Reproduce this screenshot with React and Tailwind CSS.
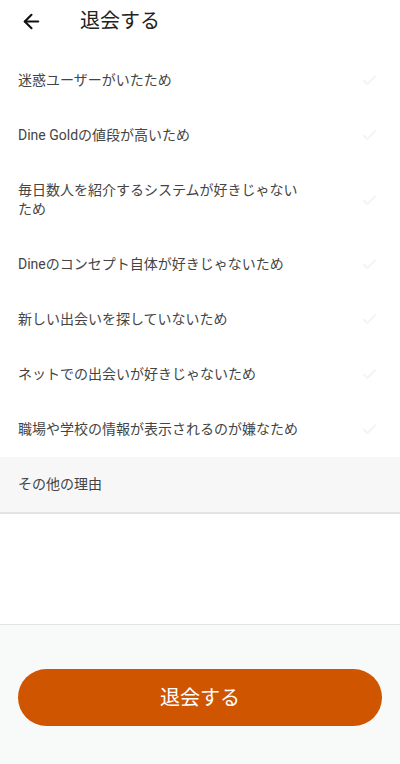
import React, { useState } from 'react';
import { ArrowLeft, Check } from 'lucide-react';

const reasons = [
  '迷惑ユーザーがいたため',
  'Dine Goldの値段が高いため',
  '毎日数人を紹介するシステムが好きじゃないため',
  'Dineのコンセプト自体が好きじゃないため',
  '新しい出会いを探していないため',
  'ネットでの出会いが好きじゃないため',
  '職場や学校の情報が表示されるのが嫌なため',
];

const App = () => {
  const [selected, setSelected] = useState(null);

  return (
    <div
      className="w-[400px] h-[764px] flex flex-col bg-white text-[#222]"
      style={{ fontFamily: 'Roboto, "Noto Sans CJK JP", sans-serif' }}
    >
      <div className="h-[42px] flex items-center shrink-0">
        <button className="w-[62px] pl-[20px] flex items-center">
          <ArrowLeft className="w-[23px] h-[23px] text-[#111]" strokeWidth={2.2} />
        </button>
        <h1 className="ml-[18px] text-[20px] leading-none text-[#222]">退会する</h1>
      </div>

      <div className="pt-[11px]">
        {reasons.map((reason, i) => (
          <button
            key={i}
            onClick={() => setSelected(i)}
            className="w-full flex items-center justify-between pl-[18px] pr-[22px] py-[18px] text-left"
          >
            <span className="max-w-[290px] text-[14px] leading-[19px] text-[#444]">{reason}</span>
            <Check
              className={`w-[17px] h-[17px] shrink-0 ${selected === i ? 'text-[#d05500]' : 'text-[#f3f3f3]'}`}
              strokeWidth={2.5}
            />
          </button>
        ))}
        <div className="h-[57px] flex items-center pl-[18px] bg-[#f7f7f7] border-b-2 border-[#e4e4e4]">
          <span className="text-[14px] text-[#444]">その他の理由</span>
        </div>
      </div>

      <div className="h-[110px] bg-white" />

      <div className="flex-1 bg-[#f8f9f9] border-t border-[#e2e2e2] px-[18px] pt-[44px]">
        <button className="w-full h-[57px] rounded-full bg-[#d05500] text-white text-[20px] flex items-center justify-center">
          退会する
        </button>
      </div>
    </div>
  );
};

export default App;
